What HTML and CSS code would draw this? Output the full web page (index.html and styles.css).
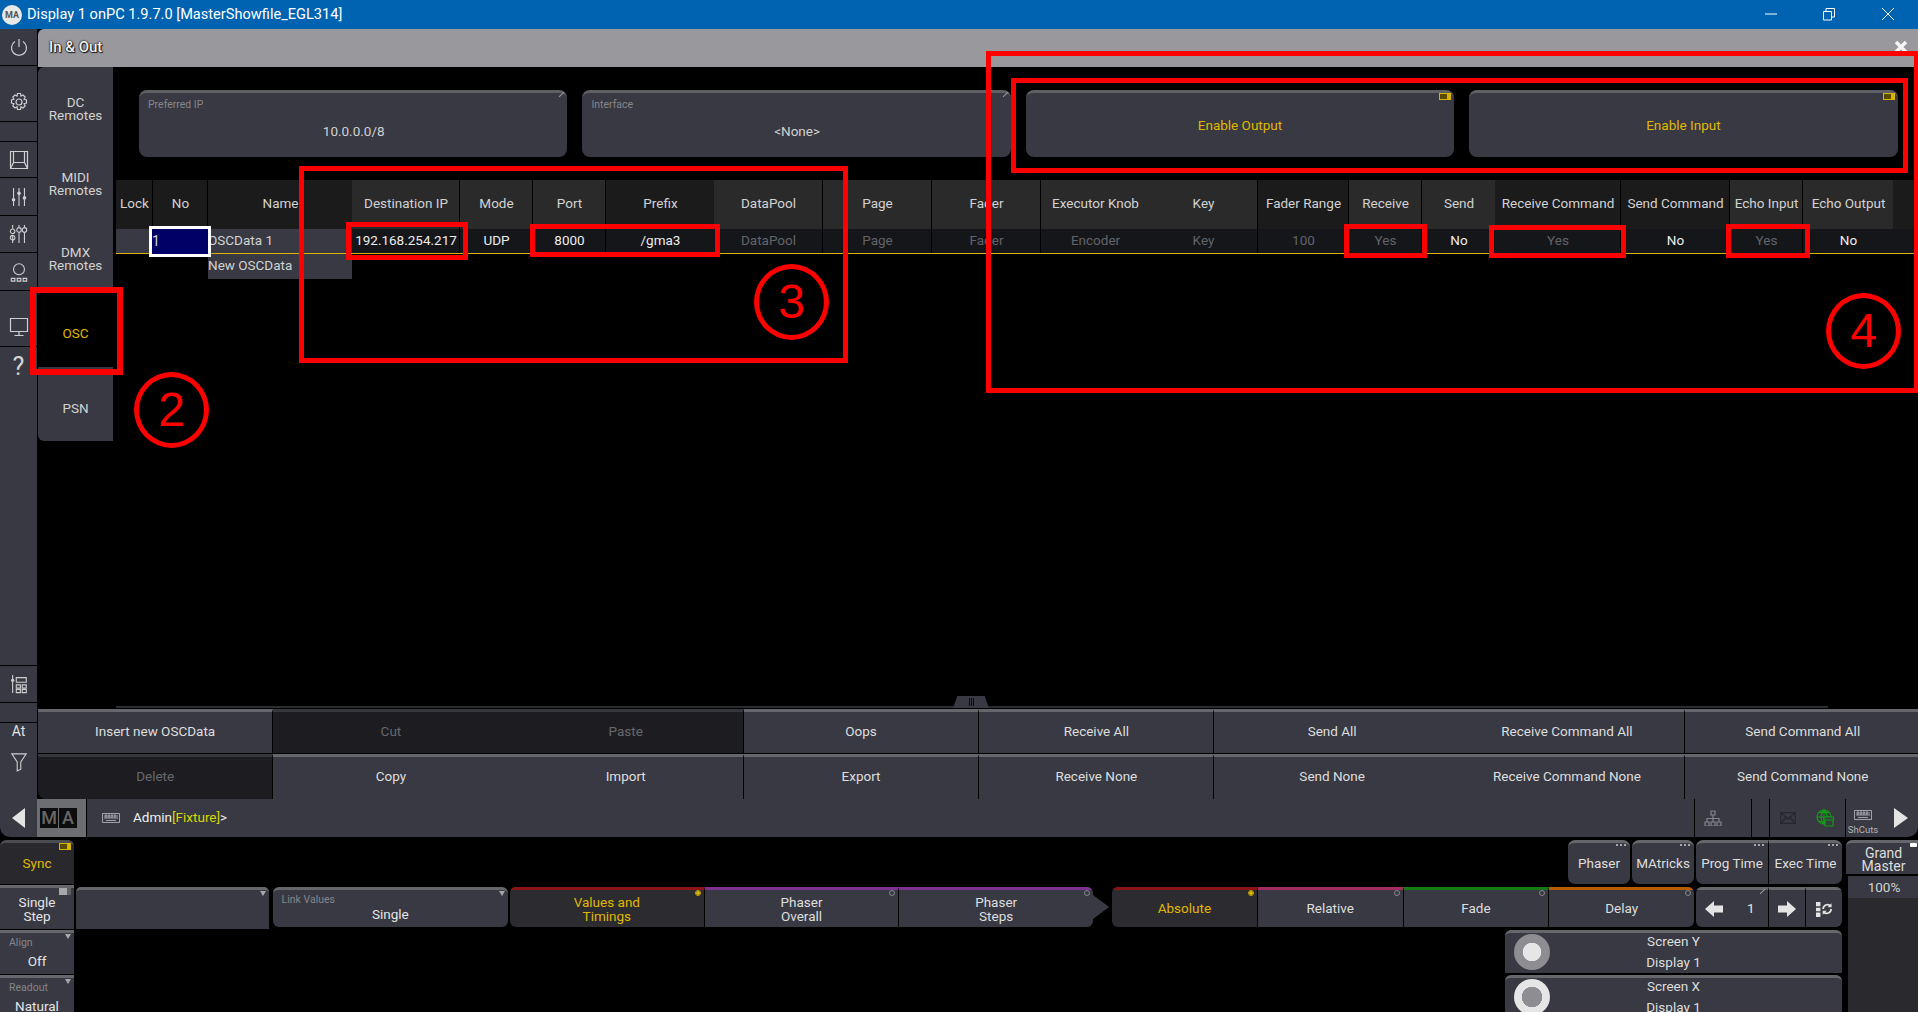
FILE: index.html
```html
<!DOCTYPE html>
<html>
	<head>
		<meta charset="utf-8">
		<title>Display 1 onPC</title>
		<link rel="stylesheet" href="styles.css">
	</head>
	<body>
		<div class="titlebar">
			<span class="app-logo">MA</span>
			<span class="app-title">Display 1 onPC 1.9.7.0 [MasterShowfile_EGL314]</span>
			<svg class="win-ctl ctl-min" viewBox="0 0 14 14"><path d="M1 7h12"/></svg>
			<svg class="win-ctl ctl-max" viewBox="0 0 14 14"><path d="M1.5 4.5h8v8.5h-8zM4 4.500V1.500h8.500v8.500h-3"/></svg>
			<svg class="win-ctl ctl-close" viewBox="0 0 14 14"><path d="M1 1l12 12M13 1L1 13"/></svg>
		</div>

		<div class="upper">
			<div class="rail">
				<div class="rail-item h37"><svg viewBox="0 0 20 20"><path d="M10 2v8M6 4.500a7.500 7.500 0 1 0 8 0"/></svg></div>
				<div class="rail-item h56 low"><svg viewBox="0 0 20 20"><path d="M8.500 1.500h3l.5 2.500 2-1 2.200 2.200-1.200 2 2.500.8v3l-2.500.8 1.200 2-2.200 2.200-2-1.200-.5 2.700h-3l-.5-2.700-2 1.200-2.200-2.200 1.200-2-2.500-.8v-3l2.500-.8-1.200-2L6 3l2 1z"/><circle cx="10" cy="10" r="3"/></svg></div>
				<div class="rail-item h20"></div>
				<div class="rail-item h36"><svg viewBox="0 0 20 20"><path d="M1.500 1.500h17v17h-17zM4.500 1.500v11l-3 6M15.500 1.500v11l3 6M4.500 12.500h11"/></svg></div>
				<div class="rail-item h38"><svg viewBox="0 0 20 22"><path d="M4 1v20M10 1v20M16 1v20"/><circle cx="4" cy="14" r="2" class="fill"/><circle cx="10" cy="7" r="2" class="fill"/><circle cx="16" cy="12" r="2" class="fill"/></svg></div>
				<div class="rail-item h37"><svg viewBox="0 0 20 22"><path d="M3 1v4M3 12v9M10 1v3M10 9v12M16 1v3M16 9v12"/><circle cx="3" cy="8" r="2.500"/><circle cx="3" cy="15" r="2.500"/><circle cx="10" cy="6.500" r="2.500"/><circle cx="16" cy="6.500" r="2.500"/></svg></div>
				<div class="rail-item h38"><svg viewBox="0 0 20 22"><circle cx="10" cy="8" r="6"/><path d="M1.500 18h4v3h-4zM8 18h4v3H8zM14.500 18h4v3h-4z"/></svg></div>
				<div class="rail-item h56 low"><svg viewBox="0 0 20 20"><path d="M1.500 1.500h17v13h-17zM10 14.500v4M5.500 18.500h9"/></svg></div>
				<div class="rail-item rail-help">?</div>
				<div class="rail-item h37"><svg viewBox="0 0 20 22"><path d="M3 1v20M7 4h11v5H7zM7 12h4.500v3.500H7zM13.500 12H18v3.500h-4.500zM7 17h4.500v3.500H7zM13.500 17H18v3.500h-4.500z"/><circle cx="3" cy="7" r="1.800" class="fill"/></svg></div>
				<div class="rail-item h20"></div>
				<div class="rail-at">
					<span>At</span>
					<svg viewBox="0 0 20 22"><path d="M2 2h16l-6 9v8l-4 2V11z"/></svg>
				</div>
			</div>

			<div class="win">
				<div class="win-head">
					<span class="win-title">In &amp; Out</span>
					<svg class="win-x" viewBox="0 0 14 14"><path d="M2 2l10 10M12 2L2 12"/></svg>
				</div>
				<div class="win-body">
					<div class="subnav">
						<div class="subnav-item">DC<br>Remotes</div>
						<div class="subnav-item">MIDI<br>Remotes</div>
						<div class="subnav-item">DMX<br>Remotes</div>
						<div class="subnav-item active">OSC</div>
						<div class="subnav-item">PSN</div>
					</div>
					<div class="panel">
						<div class="top-btns">
							<div class="big-btn"><span class="label">Preferred IP</span><span class="big-val">10.0.0.0/8</span><i class="edit"></i></div>
							<div class="big-btn"><span class="label">Interface</span><span class="big-val">&lt;None&gt;</span><i class="edit"></i></div>
							<div class="big-btn on">Enable Output<i class="toggle"></i></div>
							<div class="big-btn on">Enable Input<i class="toggle"></i></div>
						</div>
						<div class="grid-head">
							<div class="c dk sep">Lock</div>
							<div class="c dk sep">No</div>
							<div class="c dk">Name</div>
							<div class="c lt sep">Destination IP</div>
							<div class="c lt sep">Mode</div>
							<div class="c lt sep">Port</div>
							<div class="c dk">Prefix</div>
							<div class="c lt sep">DataPool</div>
							<div class="c lt sep">Page</div>
							<div class="c lt sep">Fader</div>
							<div class="c lt">Executor Knob</div>
							<div class="c lt sep">Key</div>
							<div class="c dk sep">Fader Range</div>
							<div class="c lt sep">Receive</div>
							<div class="c lt">Send</div>
							<div class="c dk sep">Receive Command</div>
							<div class="c dk sep">Send Command</div>
							<div class="c lt sep">Echo Input</div>
							<div class="c lt">Echo Output</div>
							<div class="c dk"></div>
						</div>
						<div class="grid-row">
							<div class="c pale sep"></div>
							<div class="c pale sep cell-no"><span class="no-edit">1</span></div>
							<div class="c pale left">OSCData 1</div>
							<div class="c sep val">192.168.254.217</div>
							<div class="c sep val">UDP</div>
							<div class="c sep val">8000</div>
							<div class="c val">/gma3</div>
							<div class="c sep off">DataPool</div>
							<div class="c sep off">Page</div>
							<div class="c sep off">Fader</div>
							<div class="c off">Encoder</div>
							<div class="c sep off">Key</div>
							<div class="c sep off">100</div>
							<div class="c sep off">Yes</div>
							<div class="c val">No</div>
							<div class="c sep off">Yes</div>
							<div class="c sep val">No</div>
							<div class="c sep off">Yes</div>
							<div class="c val">No</div>
							<div class="c"></div>
						</div>
						<div class="grid-new">New OSCData</div>
						<div class="panel-fill"></div>
						<div class="splitter"><div class="split-handle"><i></i><i></i><i></i></div></div>
					</div>
				</div>
				<div class="actions">
					<div class="act sep">Insert new OSCData</div>
					<div class="act dim">Cut</div>
					<div class="act dim sep">Paste</div>
					<div class="act sep">Oops</div>
					<div class="act sep">Receive All</div>
					<div class="act">Send All</div>
					<div class="act sep">Receive Command All</div>
					<div class="act">Send Command All</div>
					<div class="act dim sep first-low">Delete</div>
					<div class="act">Copy</div>
					<div class="act sep">Import</div>
					<div class="act sep">Export</div>
					<div class="act sep">Receive None</div>
					<div class="act">Send None</div>
					<div class="act sep">Receive Command None</div>
					<div class="act">Send Command None</div>
				</div>
			</div>
		</div>

		<div class="cmdbar">
			<div class="cmd-back"><svg viewBox="0 0 14 20"><path d="M13 0v20L0 10z"/></svg></div>
			<div class="ma-tile"><b>M</b><b>A</b></div>
			<svg class="kbd" viewBox="0 0 18 10"><path d="M.5.500h17v9H.5zM2 3h14M2 5h14M4 7.500h10M4 1v4M7 1v4M10 1v4M13 1v4"/></svg>
			<div class="cmd-line">Admin<span class="cmd-yl">[Fixture]</span>&gt;</div>
			<div class="cmd-seg w57">
				<svg class="ico-net" viewBox="0 0 18 16"><path d="M9 5v3M3 12V8.500h12V12M9 8v4M7 1h4v4H7zM1 12h4v4H1zM7 12h4v4H7zM13 12h4v4h-4z"/></svg>
			</div>
			<div class="cmd-seg w18"></div>
			<div class="cmd-seg w76">
				<svg class="ico-mail" viewBox="0 0 16 12"><path d="M.5.500h15v11H.5zM.5.500L8 7l7.500-6.500M.5 11.500L6 5.500M15.500 11.500L10 5.500"/></svg>
				<svg class="ico-globe" viewBox="0 0 18 18"><circle cx="8" cy="8" r="7"/><path d="M8 1v14M1 8h14M3 3.500h10M3 12.500h10M8 1c-4 3-4 11 0 14M8 1c4 3 4 11 0 14"/><path class="gbox" d="M8 8h9.500v3H8zM9 11v6h8v-6"/></svg>
			</div>
			<div class="cmd-seg w73">
				<div class="shcuts">
					<svg class="kbd" viewBox="0 0 18 10"><path d="M.5.500h17v9H.5zM2 3h14M2 5h14M4 7.500h10M4 1v4M7 1v4M10 1v4M13 1v4"/></svg>
					<span>ShCuts</span>
				</div>
				<svg class="cmd-play" viewBox="0 0 14 20"><path d="M0 0v20l14-10z"/></svg>
			</div>
		</div>

		<div class="bottom">
			<div class="bot-left">
				<div class="side-btn sync">Sync<i class="toggle"></i></div>
				<div class="side-btn">Single<br>Step<i class="toggle grey"></i></div>
				<div class="side-btn stack"><span class="label">Align</span><span class="side-val">Off</span><i class="caret"></i></div>
				<div class="side-btn stack"><span class="label">Readout</span><span class="side-val">Natural</span><i class="caret"></i></div>
			</div>
			<div class="bot-mid">
				<div class="bot-top">
					<div class="mini w62">Phaser<i class="dots"></i></div>
					<div class="mini w62">MAtricks<i class="dots"></i></div>
					<div class="mini-pair">
						<div class="mini-l">Prog Time<i class="dots"></i></div>
						<div class="mini-r">Exec Time<i class="dots"></i></div>
					</div>
				</div>
				<div class="bot-row">
					<div class="plain-btn">
						<i class="caret"></i>
					</div>
					<div class="link-btn"><span class="label">Link Values</span><span class="link-val">Single</span><i class="caret"></i></div>
					<div class="tabs w583">
						<div class="tab sel red">Values and<br>Timings<i class="dot on"></i></div>
						<div class="tab purple">Phaser<br>Overall<i class="dot"></i></div>
						<div class="tab purple">Phaser<br>Steps<i class="dot"></i></div>
					</div>
					<div class="tab-arrow"></div>
					<div class="tabs w582 one-line">
						<div class="tab sel red">Absolute<i class="dot on"></i></div>
						<div class="tab pink">Relative<i class="dot"></i></div>
						<div class="tab green">Fade<i class="dot"></i></div>
						<div class="tab orange">Delay<i class="dot"></i></div>
					</div>
					<div class="nudge">
						<div class="nudge-val">
							<svg viewBox="0 0 18 16"><path d="M0 8l9-8v4.500h9v7H9V16z"/></svg>
							<span>1</span>
							<i class="edit"></i>
						</div>
						<div class="nudge-btn w37"><svg viewBox="0 0 18 16"><path d="M18 8L9 0v4.500H0v7h9V16z"/></svg></div>
						<div class="nudge-btn"><svg class="ico-loop" viewBox="0 0 18 18"><path class="fill" d="M0 1h5v5H0zM0 7.500h5v4H0zM0 13h5v5H0z"/><path d="M8 9a5 5 0 0 1 8.500-3.500M17 9a5 5 0 0 1-8.500 3.500"/><path class="fill" d="M17.500 2.500v4.500H13zM7.500 15.500V11H12z"/></svg></div>
					</div>
				</div>
				<div class="screens">
					<div class="screen-btn">
						<span class="knob knob-y"></span>
						<div class="screen-txt"><span>Screen Y</span><span>Display 1</span></div>
					</div>
					<div class="screen-btn">
						<span class="knob knob-x"></span>
						<div class="screen-txt"><span>Screen X</span><span>Display 1</span></div>
					</div>
				</div>
			</div>
			<div class="gm">
				<div class="gm-head">Grand<br>Master<i class="toggle white"></i></div>
				<div class="gm-fader">
					<div class="gm-val">100%</div>
				</div>
			</div>
		</div>

		<!-- red notes drawn over the screenshot -->
		<div class="mark mark-osc"></div>
		<div class="mark mark-three"></div>
		<div class="mark mark-dest"></div>
		<div class="mark mark-port"></div>
		<div class="mark mark-four"></div>
		<div class="mark mark-enable"></div>
		<div class="mark mark-recv"></div>
		<div class="mark mark-rcmd"></div>
		<div class="mark mark-echo"></div>
		<div class="ring ring-2">2</div>
		<div class="ring ring-3">3</div>
		<div class="ring ring-4">4</div>
	</body>
</html>
```

FILE: styles.css
```css
* {
	margin: 0;
	padding: 0;
	box-sizing: border-box;
}
html, body {
	height: 100%;
	overflow: hidden;
}
body {
	position: relative;
	background: #000;
	color: #d2d2d2;
	font-family: Roboto, "Liberation Sans", sans-serif;
	font-size: 13.500px;
	line-height: 13px;
}
i {
	display: block;
}
svg {
	display: block;
	fill: none;
	stroke: #cfcfd2;
	stroke-width: 1.2;
}
svg .fill {
	fill: #cfcfd2;
	stroke: none;
}

/* window title */
.titlebar {
	height: 29px;
	background: #0063b1;
	display: flex;
	align-items: center;
	position: relative;
	color: #fff;
}
.app-logo {
	width: 20px;
	height: 20px;
	margin-left: 2px;
	border-radius: 50%;
	background: #e8e8e8;
	color: #555;
	font-size: 9px;
	font-weight: 700;
	line-height: 20px;
	text-align: center;
}
.app-title {
	margin-left: 5px;
	font-size: 14.600px;
}
.win-ctl {
	position: absolute;
	top: 7px;
	width: 14px;
	height: 14px;
	stroke: #fff;
	stroke-width: 1;
}
.ctl-min { left: 1764px; }
.ctl-max { left: 1822px; }
.ctl-close { left: 1881px; }

/* left rail + main window */
.upper {
	height: 770px;
	display: flex;
}
.rail {
	width: 37px;
	background: #383942;
	display: flex;
	flex-direction: column;
	margin-right: 1px;
}
.rail-item {
	display: flex;
	align-items: center;
	justify-content: center;
	border-bottom: 1px solid #000;
	flex: none;
}
.rail-item svg {
	width: 20px;
	height: 20px;
}
.h20 { height: 20px; }
.h36 { height: 36px; }
.h37 { height: 37px; }
.h38 { height: 38px; }
.h56 { height: 56px; }
.rail-item.low {
	padding-top: 17px;
}
.rail-help {
	height: 319px;
	align-items: flex-start;
	padding-top: 4px;
	color: #d6d6d6;
	font-size: 25px;
	line-height: 32px;
}
.rail-at {
	flex: 1;
	display: flex;
	flex-direction: column;
	align-items: center;
	padding-top: 2px;
	color: #e0e0e0;
}
.rail-at span {
	font-size: 14px;
}
.rail-at svg {
	width: 18px;
	height: 20px;
	margin-top: 14px;
}
.win {
	flex: 1;
	display: flex;
	flex-direction: column;
	min-width: 0;
}
.win-head {
	height: 38px;
	background: #98989d;
	border-top-left-radius: 6px;
	display: flex;
	align-items: center;
	position: relative;
	padding: 0 0 2px 11px;
}
.win-title {
	font-size: 15px;
	font-weight: 500;
	color: #f2f2f2;
	text-shadow: 0 0 2px #000, 0 0 1px #000, 1px 1px 1px #222;
}
.win-x {
	position: absolute;
	top: 11px;
	right: 10px;
	width: 14px;
	height: 14px;
	stroke: #f4f4f4;
	stroke-width: 3.500;
}
.win-body {
	flex: 1;
	display: flex;
	min-height: 0;
}

/* sub navigation */
.subnav {
	width: 75px;
	height: 374px;
	background: #383942;
	border-radius: 6px 0 0 6px;
	flex: none;
}
.subnav-item {
	height: 75px;
	padding-top: 8px;
	display: flex;
	align-items: center;
	justify-content: center;
	text-align: center;
	line-height: 13px;
}
.subnav-item.active {
	background: #000;
	color: #e0b800;
}
.panel {
	flex: 1;
	padding-left: 3px;
	display: flex;
	flex-direction: column;
	min-width: 0;
}

/* big buttons above the table */
.top-btns {
	display: grid;
	grid-template-columns: repeat(4, 428.400px);
	column-gap: 15px;
	margin: 23px 0 23px 23px;
}
.big-btn {
	height: 67px;
	background: #383942;
	border-top: 3px solid #5f6066;
	border-radius: 8px;
	position: relative;
	display: flex;
	align-items: center;
	justify-content: center;
}
.big-btn.on {
	color: #e0b800;
}
.label {
	position: absolute;
	left: 9px;
	top: 6px;
	font-size: 10.500px;
	line-height: 11px;
	color: #85868c;
}
.big-val {
	padding: 13px 0 0 1px;
}
.edit {
	position: absolute;
	top: 1px;
	right: 2px;
	width: 7px;
	height: 1px;
	background: #9a9a9a;
	transform: rotate(-45deg);
}
.toggle {
	position: absolute;
	top: 0;
	right: 3px;
	width: 12px;
	height: 7px;
	background: #5a4a00;
	border: 1px solid #d8b400;
	border-right-width: 4px;
}
.toggle.grey {
	background: #5f6066;
	border: 0;
	border-left: 8px solid #a8a8ac;
}
.toggle.white {
	background: #fff;
	border: 0;
	border-radius: 1px;
}

/* OSC table */
.grid-head, .grid-row {
	display: grid;
	grid-template-columns: 37px 55px 144px 108px 73px 73px 108px 109px 109px 109px 108px 109px 91px 73px 73px 126px 109px 73px 90px 21px;
}
.grid-head {
	height: 49px;
}
.grid-row {
	height: 25px;
	border-bottom: 1px solid #d8b400;
	background: #15161a;
}
.c {
	display: flex;
	align-items: center;
	justify-content: center;
	white-space: nowrap;
	overflow: hidden;
	padding: 0 0 2px 1px;
}
.c.sep {
	border-right: 1px solid #000;
}
.dk { background: #1b1b1c; }
.lt { background: #2a2a2b; }
.pale { background: #383942; }
.c.left {
	justify-content: flex-start;
	padding-left: 0;
}
.val { color: #ededed; }
.off { color: #626368; }
.cell-no {
	overflow: visible;
	position: relative;
}
.no-edit {
	position: absolute;
	left: -4px;
	top: -3px;
	width: 62px;
	height: 31px;
	background: #000066;
	border: 3px solid #fff;
	line-height: 24px;
	color: #d8d8d8;
	font-size: 14px;
}
.grid-new {
	width: 144px;
	height: 25px;
	margin-left: 92px;
	background: #383942;
	line-height: 23px;
}
.panel-fill {
	flex: 1;
}
.splitter {
	height: 2px;
	margin-right: 90px;
	margin-bottom: 1px;
	background: #2b2c30;
	position: relative;
}
.split-handle {
	position: absolute;
	left: 837px;
	bottom: 0;
	width: 36px;
	height: 12px;
	background: #383942;
	clip-path: polygon(12% 0, 88% 0, 100% 100%, 0 100%);
	display: flex;
	justify-content: center;
	gap: 1px;
	padding-top: 2px;
}
.split-handle i {
	width: 1px;
	height: 8px;
	background: #0b0b0b;
}

/* action buttons */
.actions {
	display: grid;
	grid-template-columns: repeat(8, 235.300px);
	grid-auto-rows: 45px;
	flex: none;
}
.act {
	background: #383942;
	border-top: 3px solid #66676c;
	padding-bottom: 3px;
	display: flex;
	align-items: center;
	justify-content: center;
	color: #dedede;
}
.act:nth-child(-n+8) {
	height: 44px;
	padding-bottom: 3px;
}
.act.sep {
	border-right: 1px solid #000;
}
.act.dim {
	background: #1d1d21;
	border-top-color: #36373b;
	color: #67686c;
}
.first-low {
	border-bottom-left-radius: 8px;
}

/* command line */
.cmdbar {
	height: 38px;
	background: #383942;
	border-radius: 0 0 10px 10px;
	display: flex;
	align-items: center;
}
.cmd-back {
	width: 37px;
	display: flex;
	justify-content: center;
}
.cmd-back svg, .cmd-play {
	width: 14px;
	height: 20px;
	fill: #e4e4e4;
	stroke: none;
}
.ma-tile {
	width: 50px;
	height: 38px;
	background: #6d6e72;
	border-right: 1px solid #000;
	display: flex;
	align-items: center;
	justify-content: center;
	gap: 1px;
	padding-right: 6px;
}
.ma-tile b {
	width: 18px;
	height: 20px;
	background: #0d0d0d;
	color: #666;
	font-size: 18px;
	line-height: 20px;
	font-weight: 500;
	text-align: center;
}
.kbd {
	width: 18px;
	height: 10px;
	stroke-width: .7;
	flex: none;
}
.cmdbar > .kbd {
	margin-left: 15px;
}
.cmd-line {
	margin-left: 13px;
	flex: 1;
	padding-bottom: 1px;
	color: #f0f0f0;
}
.cmd-yl {
	color: #d8d800;
}
.cmd-seg {
	height: 38px;
	border-left: 1px solid #000;
	display: flex;
	align-items: center;
	flex: none;
}
.w57 { width: 57px; justify-content: center; padding-right: 20px; }
.w18 { width: 18px; }
.w76 { width: 76px; padding-left: 10px; gap: 20px; }
.w73 { width: 73px; padding-left: 3px; gap: 17px; }
.ico-net {
	width: 18px;
	height: 16px;
	stroke: #85868c;
}
.ico-mail {
	width: 16px;
	height: 12px;
	stroke: #27282c;
	stroke-width: 1.500;
}
.ico-globe {
	width: 18px;
	height: 18px;
	stroke: #12a012;
	stroke-width: 1.100;
}
.gbox {
	fill: #383942;
}
.shcuts {
	display: flex;
	flex-direction: column;
	align-items: center;
	gap: 5px;
	width: 28px;
	padding-top: 7px;
}
.shcuts span {
	font-size: 9.500px;
	line-height: 9px;
	color: #b4b4b4;
}

/* lower part */
.bottom {
	height: 172px;
	margin-top: 3px;
	display: flex;
	overflow: hidden;
}
.bot-left {
	width: 74px;
	flex: none;
	display: flex;
	flex-direction: column;
	gap: 1px;
}
.side-btn {
	height: 44px;
	flex: none;
	background: #383942;
	border-top: 3px solid #66676c;
	position: relative;
	display: flex;
	align-items: center;
	justify-content: center;
	text-align: center;
	line-height: 14px;
	color: #e4e4e4;
}
.side-btn.sync {
	background: #28282d;
	border-radius: 6px 6px 0 0;
	color: #e0b800;
	border-top-color: #4b4c50;
	padding-bottom: 2px;
}
.side-btn.stack {
	align-items: flex-end;
	padding-bottom: 6px;
}
.side-btn .label {
	top: 4px;
}
.side-btn .toggle {
	top: 0;
	right: 3px;
}
.caret {
	position: absolute;
	top: 1px;
	right: 3px;
	border: 3px solid transparent;
	border-top: 5px solid #a8a8ac;
	border-bottom: 0;
}
.bot-mid {
	flex: 1;
	margin-left: 2px;
	display: flex;
	flex-direction: column;
	align-items: stretch;
	min-width: 0;
}
.bot-top {
	height: 44px;
	display: flex;
	justify-content: flex-end;
	gap: 2px;
	margin-bottom: 3px;
}
.mini, .mini-l, .mini-r {
	position: relative;
	height: 44px;
	background: #383942;
	border-top: 3px solid #66676c;
	display: flex;
	align-items: center;
	justify-content: center;
	white-space: nowrap;
	color: #dedede;
}
.mini {
	border-radius: 7px;
}
.w62 { width: 62px; }
.mini-pair {
	display: flex;
}
.mini-l {
	width: 73px;
	border-right: 1px solid #000;
	border-radius: 7px 0 0 7px;
}
.mini-r {
	width: 73px;
	border-radius: 0 7px 7px 0;
}
.dots {
	position: absolute;
	top: 1px;
	right: 4px;
	width: 10px;
	height: 2px;
	background: repeating-linear-gradient(90deg, #a8a8ac 0 2px, transparent 2px 4px);
}
.bot-row {
	height: 42px;
	display: flex;
	align-items: flex-start;
}
.plain-btn {
	width: 193px;
	height: 42px;
	background: #383942;
	border-top: 3px solid #66676c;
	border-radius: 5px 5px 0 0;
	position: relative;
	margin-right: 4px;
}
.link-btn {
	width: 236px;
	height: 40px;
	background: #383942;
	border-top: 3px solid #66676c;
	border-radius: 6px;
	position: relative;
	text-align: center;
	margin-right: 2px;
}
.link-btn .label {
	top: 4px;
}
.link-val {
	display: block;
	padding-top: 18px;
	color: #e4e4e4;
}
.tabs {
	height: 40px;
	display: flex;
	border-radius: 6px;
	overflow: hidden;
	flex: none;
}
.w583 { width: 583px; }
.w582 { width: 582px; }
.tab {
	flex: 1;
	background: #383942;
	border-top: 3px solid #66676c;
	border-right: 1px solid #000;
	display: flex;
	align-items: center;
	justify-content: center;
	text-align: center;
	position: relative;
	line-height: 14px;
	color: #dedede;
}
.one-line .tab {
	padding-bottom: 2px;
}
.tab:last-child {
	border-right: 0;
}
.tab.sel {
	background: #2b2b30;
	color: #e0b800;
}
.red { border-top-color: #8c1414; }
.purple { border-top-color: #7c3290; }
.pink { border-top-color: #a02c60; }
.green { border-top-color: #177a17; }
.orange { border-top-color: #b85c00; }
.dot {
	position: absolute;
	top: 0;
	right: 3px;
	width: 6px;
	height: 6px;
	border-radius: 50%;
	border: 1px solid #85868c;
}
.dot.on {
	border-color: #c8a800;
	background: radial-gradient(#e0b800 0 1.500px, transparent 2px);
}
.tab-arrow {
	width: 19px;
	height: 24px;
	margin-top: 8px;
	background: #383942;
	clip-path: polygon(0 0, 85% 50%, 0 100%);
	flex: none;
}
.nudge {
	width: 146px;
	height: 40px;
	margin-left: 2px;
	display: flex;
	border-radius: 6px;
	overflow: hidden;
	flex: none;
}
.nudge-val {
	width: 73px;
	position: relative;
	padding-left: 9px;
	gap: 24px;
}
.nudge-val, .nudge-btn {
	background: #383942;
	border-top: 3px solid #66676c;
	border-right: 1px solid #000;
	display: flex;
	align-items: center;
	color: #e4e4e4;
}
.nudge-btn {
	flex: 1;
	justify-content: center;
	border-right: 0;
}
.nudge-btn.w37 {
	flex: none;
	width: 37px;
	border-right: 1px solid #000;
}
.nudge svg {
	width: 18px;
	height: 16px;
	fill: #e4e4e4;
	stroke: none;
}
.nudge .ico-loop {
	stroke: #e4e4e4;
	stroke-width: 2;
	fill: none;
}
.ico-loop .fill {
	fill: #e4e4e4;
}
.screens {
	width: 337px;
	margin: 1px 0 0 auto;
	display: flex;
	flex-direction: column;
	gap: 2px;
}
.screen-btn {
	height: 43px;
	flex: none;
	background: #383942;
	border-top: 3px solid #66676c;
	border-radius: 6px 6px 0 0;
	position: relative;
	display: flex;
	justify-content: center;
}
.screen-txt {
	display: flex;
	flex-direction: column;
	align-items: center;
	gap: 8px;
	padding: 2px 0 0 0;
	color: #dedede;
}
.knob {
	position: absolute;
	left: 9px;
	top: 1px;
	width: 36px;
	height: 36px;
	border-radius: 50%;
}
.knob-y {
	background: radial-gradient(#e6e6e6 0 9px, #8e8e92 9.500px);
}
.knob-x {
	background: radial-gradient(#8e8e92 0 10px, #e6e6e6 10.500px);
}
.gm {
	width: 72px;
	margin-left: 4px;
	flex: none;
	display: flex;
	flex-direction: column;
}
.gm-head {
	height: 34px;
	background: #383942;
	border-top: 3px solid #66676c;
	border-radius: 6px 0 0 0;
	text-align: center;
	padding: 4px 0 0 3px;
	position: relative;
	color: #dedede;
	font-size: 14px;
}
.gm-head .toggle {
	top: 0;
	right: 1px;
	width: 7px;
	height: 4px;
}
.gm-fader {
	flex: 1;
	margin: 2px 0 0 2px;
	background: #2a2a2e;
}
.gm-val {
	height: 22px;
	background: #383942;
	line-height: 22px;
	padding-left: 2px;
	text-align: center;
}

/* annotations */
.mark {
	position: absolute;
	border: 5px solid #ff0000;
}
.mark-osc { left: 30px; top: 287px; width: 93px; height: 88px; border-width: 6px; }
.mark-three { left: 299px; top: 166px; width: 549px; height: 197px; }
.mark-dest { left: 346px; top: 222px; width: 122px; height: 38px; }
.mark-port { left: 530px; top: 224px; width: 190px; height: 33px; }
.mark-four { left: 986px; top: 51px; width: 932px; height: 342px; border-right-width: 4px; }
.mark-enable { left: 1011px; top: 78px; width: 897px; height: 95px; }
.mark-recv { left: 1344px; top: 224px; width: 83px; height: 34px; }
.mark-rcmd { left: 1489px; top: 225px; width: 137px; height: 33px; }
.mark-echo { left: 1726px; top: 224px; width: 84px; height: 34px; }
.ring {
	position: absolute;
	width: 75px;
	height: 76px;
	border: 5px solid #ff0000;
	border-radius: 50%;
	color: #ff0000;
	font-size: 48px;
	line-height: 66px;
	text-align: center;
	font-family: "Liberation Sans", sans-serif;
}
.ring-2 { left: 134px; top: 372px; }
.ring-3 { left: 754px; top: 264px; }
.ring-4 { left: 1826px; top: 293px; }
```
